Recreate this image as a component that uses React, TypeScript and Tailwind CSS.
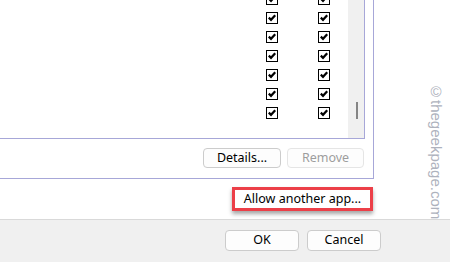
import React from 'react';

const font = { fontFamily: '"Segoe UI", "Noto Sans", "Liberation Sans", sans-serif' };

const CheckBox = () => (
  <svg width="12" height="12" viewBox="0 0 12 12" shapeRendering="crispEdges">
    <rect x="0.5" y="0.5" width="11" height="11" fill="#fff" stroke="#000" />
    <path d="M2.8 5.6 L5 7.8 L9.2 3.2" fill="none" stroke="#000" strokeWidth="2.2" shapeRendering="auto" />
  </svg>
);

const rows = [0, 1, 2, 3, 4, 5, 6];

const WinButton = ({ children, className = '', disabled = false }) => (
  <button
    className={`flex items-center justify-center rounded-[4px] border text-[12.5px] leading-none ${
      disabled ? 'border-[#e5e5e5] text-[#9d9d9d] bg-[#fdfdfd]' : 'border-[#cccccc] text-black bg-[#fdfdfd]'
    } ${className}`}
  >
    {children}
  </button>
);

export default function App() {
  return (
    <div className="relative w-[450px] h-[262px] overflow-hidden bg-white flex flex-col" style={font}>
      <div className="h-[219px] bg-white flex flex-col">
        {/* outer group box */}
        <div className="w-[374px] h-[179px] border-r border-b border-[#a7a7d8] flex flex-col">
          {/* list */}
          <div className="w-[365px] h-[139px] border-r border-b border-[#a7a7d8] flex overflow-hidden">
            <div className="w-[348px] flex flex-col -mt-[11px]">
              {rows.map((r) => (
                <div key={r} className="h-[19px] shrink-0 flex items-center">
                  <div className="ml-[266px] w-[12px] h-[12px]"><CheckBox /></div>
                  <div className="ml-[40px] w-[12px] h-[12px]"><CheckBox /></div>
                </div>
              ))}
            </div>
            <div className="w-[16px] bg-[#f0f0f0] flex flex-col items-center">
              <div className="mt-[102px] ml-[1px] w-[2px] h-[17px] bg-[#858585]" />
            </div>
          </div>
          <div className="flex justify-end gap-[6px] mt-[9px] pr-[9px]">
            <WinButton className="w-[78px] h-[20px]">Details...</WinButton>
            <WinButton className="w-[77px] h-[20px]" disabled>Remove</WinButton>
          </div>
        </div>
        <div className="flex mt-[8px] pl-[232px]">
          <div className="w-[141px] h-[24px] border-[3px] border-[#ec3f48] bg-white shadow-[0_3px_4px_rgba(0,0,0,0.35)] flex items-center justify-center text-[12.5px] text-black">
            Allow another app...
          </div>
        </div>
      </div>
      <div className="flex-1 bg-[#f0f0f0] border-t border-[#d9d9d9] flex justify-end gap-[8px] pt-[10px] pr-[69px]">
        <WinButton className="w-[74px] h-[21px]">OK</WinButton>
        <WinButton className="w-[74px] h-[21px]">Cancel</WinButton>
      </div>
      <div
        className="absolute left-[424px] top-[83px] text-[15px] text-[#aeb2bd] [writing-mode:vertical-rl]"
        style={{ fontFamily: '"Liberation Sans", Arial, sans-serif' }}
      >
        ©thegeekpage.com
      </div>
    </div>
  );
}
